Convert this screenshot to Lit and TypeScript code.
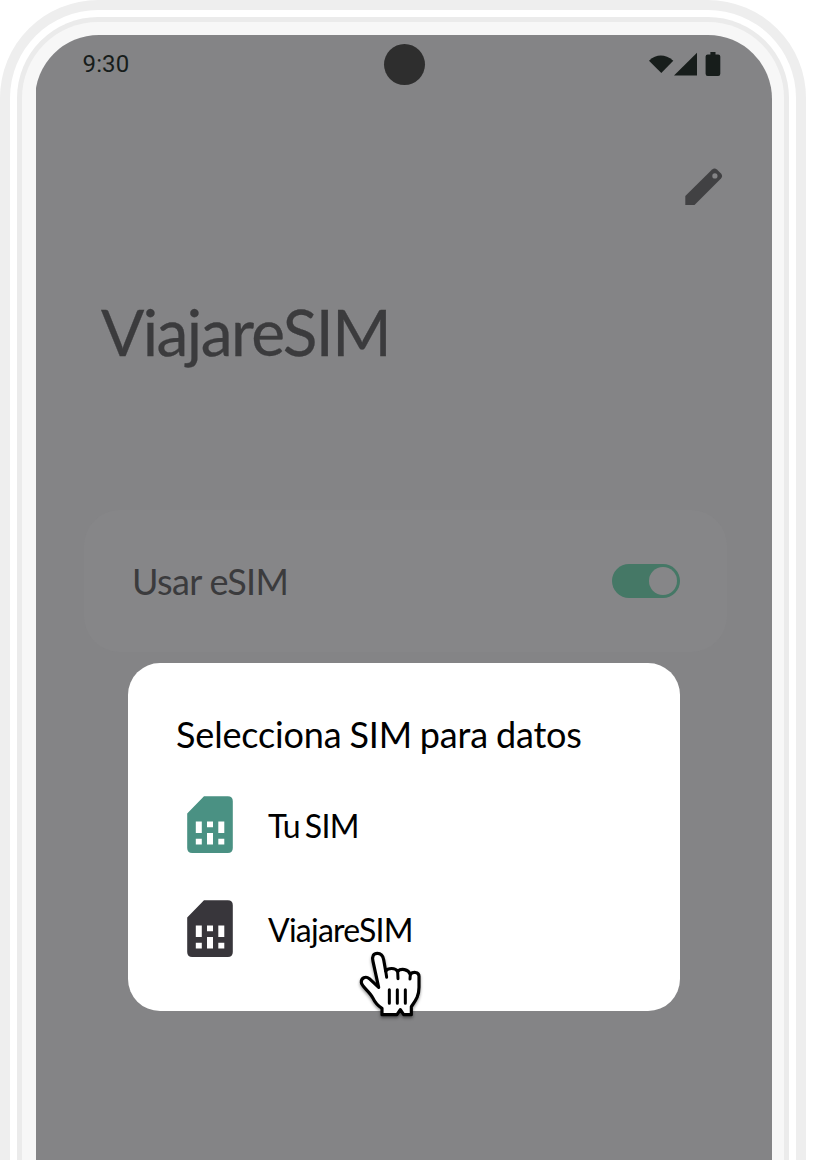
import { LitElement, html, css } from "lit";
import { customElement, property } from "lit/decorators.js";

@customElement("sim-option")
class SimOption extends LitElement {
  @property() color = "#38363b";
  static styles = css`
    :host { display: flex; align-items: center; height: 57px; gap: 35px; padding-left: 11px; color: #000; }
    svg { display: block; flex: none; }
    .label { font-size: 32px; line-height: 40px; white-space: nowrap; padding-top: 2px; letter-spacing: -0.75px; word-spacing: -2.5px; }
  `;
  render() {
    return html`<svg width="46" height="57" viewBox="0 0 46 57">
        <path fill=${this.color} fill-rule="evenodd"
          d="M17 .3H40.8Q45.8.3 45.8 5.3V52Q45.8 57 40.8 57H5.2Q.2 57 .2 52V17.4ZM8.8 25.5V37H14.8V25.5ZM20 25.5V31.2H26V25.5ZM31.3 25.5V37H37.3V25.5ZM8.8 42.8V48.6H14.8V42.8ZM20 37V48.6H26V37ZM31.3 42.8V48.6H37.3V42.8Z"/>
      </svg><span class="label"><slot></slot></span>`;
  }
}

@customElement("app-root")
class AppRoot extends LitElement {
  static styles = css`
    :host { display: block; width: 814px; height: 1160px; overflow: hidden; background: #fff; font-family: Lato, "Open Sans", sans-serif; }
    * { box-sizing: border-box; }
    svg { display: block; }
    .phone { position: relative; width: 806px; height: 1400px; padding: 10px; background: #eee; border-radius: 98px; }
    .gap { height: 100%; padding: 7px; background: #fff; border-radius: 88px; }
    .rim { height: 100%; padding: 5px; background: #ebebeb; border-radius: 81px; }
    .bezel { height: 100%; padding: 13px 12.5px 13px 14px; background: #f7f7f7; border-radius: 76px; }
    .clip { height: 100%; overflow: hidden; }
    .screen { height: 100%; margin: -0.5px 0 0 -1.2px; padding-left: 1.2px; border-radius: 64px; background: #848486; color: #3b3b3d; }
    .status { display: grid; grid-template-columns: 1fr 41px 1fr; align-items: center; height: 59px; padding: 0 51px 0 46.5px; }
    .time { font: 24px/30px Roboto, sans-serif; color: #171d1b; letter-spacing: 0.15px; }
    .camera { width: 41px; height: 41px; margin-left: 2.5px; border-radius: 50%; background: #2e2e2e; }
    .signals { justify-self: end; margin-top: 1px; }
    .tools { display: flex; justify-content: flex-end; padding: 70px 43.5px 0 0; }
    h1 { margin: 82px 0 0 65px; font-size: 64px; line-height: 76px; font-weight: 400; letter-spacing: -1.55px; -webkit-text-stroke: 0.3px; }
    .card { display: flex; align-items: center; justify-content: space-between; height: 142px; margin: 140px 44.5px 0 48px; padding: 0 47px 0 48px; border-radius: 36px; background: #868688; font-size: 36px; }
    .use { letter-spacing: -0.65px; }
    .toggle { display: flex; justify-content: flex-end; width: 68px; height: 34px; padding: 3px; border-radius: 17px; background: #457866; }
    .knob { width: 28px; height: 28px; border-radius: 50%; background: #868688; }
    .dialog { position: absolute; left: 128px; top: 662.5px; width: 552px; height: 348px; padding: 49px 48px; border-radius: 32px; background: #fff; color: #000; }
    h2 { margin: 0 0 40.5px; font-size: 36px; line-height: 44px; font-weight: 400; white-space: nowrap; letter-spacing: -0.15px; word-spacing: -1.2px; }
    .options { display: flex; flex-direction: column; gap: 47px; }
    .pointer { position: absolute; left: 358px; top: 950px; filter: drop-shadow(0 2px 1.5px rgba(0,0,0,.4)); overflow: visible; }
  `;
  render() {
    return html`
      <div class="phone">
        <div class="gap"><div class="rim"><div class="bezel"><div class="clip"><div class="screen">
          <div class="status">
            <span class="time">9:30</span>
            <span class="camera"></span>
            <svg class="signals" width="74" height="26" viewBox="0 0 74 26" fill="#171d1b">
              <path d="M2 8.7Q13.5-1.5 26.3 8.7L14.3 21Z"/>
              <path d="M50 .7V23.4H27Z"/>
              <path d="M63.4 0H68.5V2.4H71.2Q73.3 2.4 73.3 4.5V21.8Q73.3 24 71.2 24H60.7Q58.6 24 58.6 21.8V4.5Q58.6 2.4 60.7 2.4H63.4Z"/>
            </svg>
          </div>
          <div class="tools">
            <svg width="48" height="48" viewBox="0 0 48 48">
              <path fill="#414143" d="M5.3 32V41H14.5L41 14.5Q43.2 12 41 9.6L36.9 5.5Q34.6 3.5 32.1 5.5Z"/>
              <circle cx="34.9" cy="11.9" r="2.6" fill="#848486"/>
            </svg>
          </div>
          <h1>ViajareSIM</h1>
          <div class="card"><span class="use">Usar eSIM</span><span class="toggle"><span class="knob"></span></span></div>
        </div></div></div></div></div>
        <div class="dialog">
          <h2>Selecciona SIM para datos</h2>
          <div class="options">
            <sim-option color="#4a9183">Tu SIM</sim-option>
            <sim-option color="#38363b">ViajareSIM</sim-option>
          </div>
        </div>
        <svg class="pointer" width="65" height="70" viewBox="54 150 195 210">
          <path fill="#fff" stroke="#000" stroke-width="9.5" stroke-linejoin="round"
            d="M99 184C95 168 101 160 112 160C123 160 129 168 131 179L137 213C144 204 165 202 173 214C183 204 205 207 211 223C218 215 237 214 237 229V262C237 290 226 302 214 320V344H191L181 329L171 344H126V325C111 316 104 306 98 293C88 274 65 260 64 247C63 234 77 227 88 236L116 262Z"/>
          <path fill="none" stroke="#000" stroke-width="9" stroke-linecap="round" d="M137 212L140 232M173 214L174 236M211 223L210 237M148 269V310M172 269V310M196 269V310"/>
        </svg>
      </div>`;
  }
}
